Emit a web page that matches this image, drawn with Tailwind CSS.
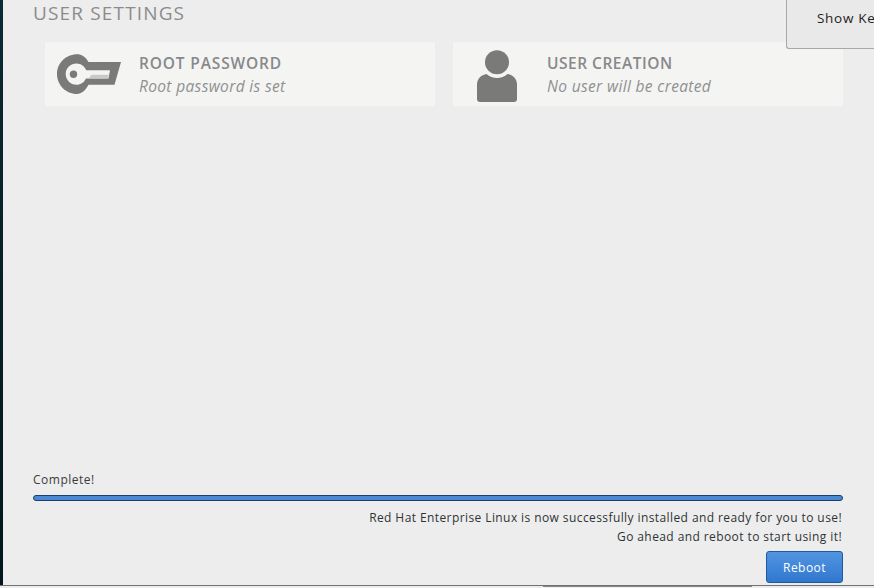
<!doctype html>
<html><head><meta charset="utf-8"><script src="https://cdn.jsdelivr.net/npm/@tailwindcss/browser@4"></script></head>
<body class="m-0 overflow-hidden">
<div class="relative flex w-[874px] h-[588px] overflow-hidden bg-[#ededed] font-['Open_Sans',sans-serif]">
  <div class="w-[3px] h-[585px] shrink-0 bg-gradient-to-b from-[#0b2a33] to-[#04161c]"></div>
  <main class="flex flex-col flex-1 h-[583px] pl-[30px] pr-[31px]">
    <h2 class="h-[42px] pt-[1px] text-[19px] leading-[24px] tracking-[1.15px] text-[#8a8c8c] font-normal">USER SETTINGS</h2>
    <div class="flex gap-[18px] pl-[12px]">
      <section class="flex items-start w-[390px] h-[64px] bg-[#f4f4f3]">
        <svg class="ml-[12px] mt-[12px] shrink-0" width="64" height="40" viewBox="57 54 64 40" aria-hidden="true">
          <path fill="#7a7a78" d="M77 54.200c4.500 0 8.600 2.500 11.500 7.800H121l-6.500 22.800H88.500C85.500 90.500 81.500 94 77 94c-11 0-20-9-20-20s9-19.800 20-19.800z"/>
          <path fill="#f4f4f3" d="M76.500 63.500c4.500 0 8 2.800 9.700 6.700H110l-1.500 8.300H86c-1.700 3.800-5.200 6.300-9.500 6.300-5.800 0-10.800-4.800-10.800-10.800s5-10.500 10.800-10.500z"/>
          <path fill="#c9c9c7" d="M91.500 74.800h17.300l-.8 3.700H88.500z"/>
          <circle cx="73.500" cy="74.300" r="3.700" fill="#7a7a78"/>
        </svg>
        <div class="ml-[18px] pt-[12px]">
          <div class="text-[15.5px] leading-[18px] tracking-[0.85px] font-semibold text-[#87898a]">ROOT PASSWORD</div>
          <div class="mt-[5px] text-[15.5px] leading-[18px] tracking-[0.35px] italic text-[#8f9191]">Root password is set</div>
        </div>
      </section>
      <section class="flex items-start w-[390px] h-[64px] bg-[#f4f4f3]">
        <svg class="ml-[24px] mt-[8px] shrink-0" width="40" height="52" viewBox="477 50 40 52" aria-hidden="true">
          <circle cx="497" cy="62.200" r="12" fill="#7a7a78"/>
          <path fill="#7a7a78" d="M486.500 74c3 2.800 6.500 4 10.500 4s7.500-1.200 10.500-4c5 .8 9.500 4.500 9.500 10.500v14.500c0 1.800-1.200 3-3 3h-34c-1.800 0-3-1.200-3-3V84.500c0-6 4.500-9.700 9.500-10.500z"/>
        </svg>
        <div class="ml-[30px] pt-[12px]">
          <div class="text-[15.5px] leading-[18px] tracking-[0.5px] font-semibold text-[#87898a]">USER CREATION</div>
          <div class="mt-[5px] text-[15.5px] leading-[18px] tracking-[0.35px] italic text-[#8f9191]">No user will be created</div>
        </div>
      </section>
    </div>
    <div class="flex-1"></div>
    <div class="text-[12px] leading-[16px] text-[#3a3c3c] tracking-[0.5px]">Complete!</div>
    <div class="mt-[7px] h-[6px] rounded-[3px] border border-[#1d3f66] bg-[#4a8ad4]"></div>
    <div class="mt-[7px] pr-[1px] text-right text-[12px] leading-[19px] text-[#2e3436] tracking-[0.41px]">
      <p>Red Hat Enterprise Linux is now successfully installed and ready for you to use!</p>
      <p>Go ahead and reboot to start using it!</p>
    </div>
    <div class="flex justify-end mt-[5px]">
      <button class="w-[77px] h-[32px] pt-[2px] rounded-[3px] border border-[#1f5a9e] bg-gradient-to-b from-[#5294e0] to-[#2f78d0] text-white text-[12px] tracking-[0.45px]">Reboot</button>
    </div>
  </main>
  <div class="absolute right-0 top-[-1px] w-[88px] h-[50px] pl-[30px] pt-[10px] rounded-bl-[3px] border-l border-b border-[#a8a8a8] bg-[#e9e9e9] text-[13.5px] leading-[18px] text-[#1f2224] tracking-[0.7px]"><span class="block w-[57px] overflow-hidden whitespace-nowrap">Show Keyboard</span></div>
  <div class="absolute left-0 bottom-0 w-full h-[3px] bg-[#ededed] border-t border-[#6f7070]">
    <div class="absolute left-[543px] top-0 w-[209px] h-[1px] bg-[#8a8a8a]"></div>
  </div>
</div>
</body></html>
